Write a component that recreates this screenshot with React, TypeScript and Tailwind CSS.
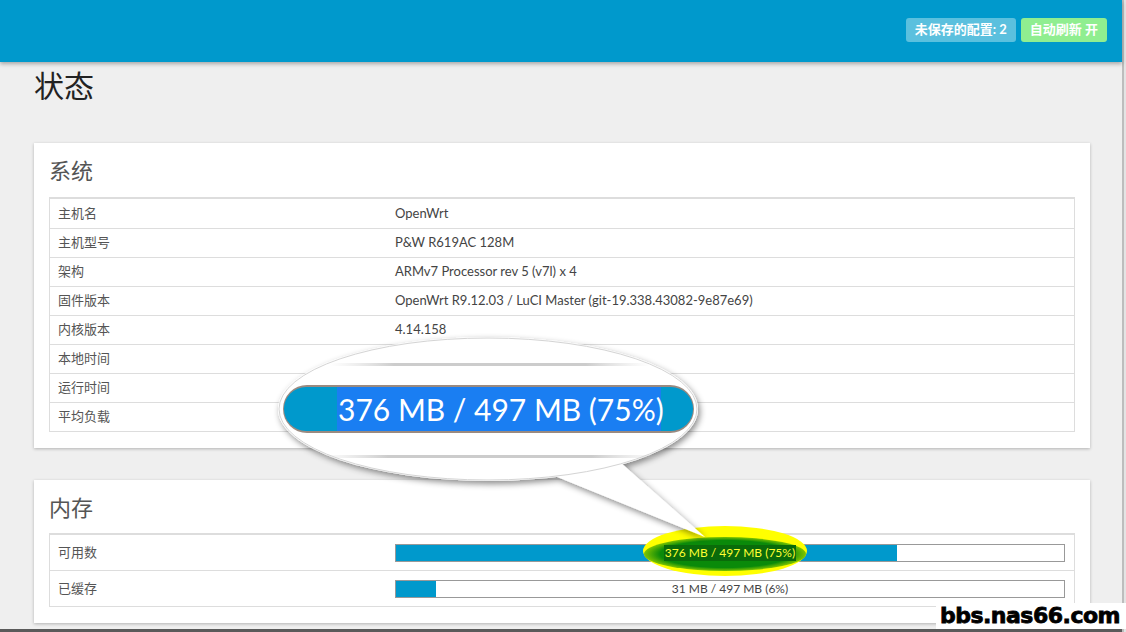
const FONT = "font-['Lato','Noto_Sans_CJK_SC',sans-serif]";

const systemRows: [string, string][] = [
  ["主机名", "OpenWrt"],
  ["主机型号", "P&W R619AC 128M"],
  ["架构", "ARMv7 Processor rev 5 (v7l) x 4"],
  ["固件版本", "OpenWrt R9.12.03 / LuCI Master (git-19.338.43082-9e87e69)"],
  ["内核版本", "4.14.158"],
  ["本地时间", ""],
  ["运行时间", ""],
  ["平均负载", ""],
];

function Badge({ label, color }: { label: string; color: string }) {
  return (
    <span
      className={`${color} h-[24px] px-[9px] rounded-[3px] flex items-center text-white text-[13px] font-bold`}
    >
      {label}
    </span>
  );
}

function Bar({ percent, text, marked }: { percent: number; text: string; marked?: boolean }) {
  return (
    <div className="relative h-[18px] w-full border border-[#999] bg-white">
      <div className="absolute left-0 top-0 bottom-0 bg-[#0099cc]" style={{ width: `${percent}%` }} />
      <div className="relative z-20 h-full flex items-center justify-center text-[12px] leading-none">
        {marked ? (
          <span className="bg-[#0a6b0a] text-[#ffff33] px-[1px] py-[2px]">{text}</span>
        ) : (
          <span className="text-[#444]">{text}</span>
        )}
      </div>
    </div>
  );
}

function Card({ title, children, className }: { title: string; children: React.ReactNode; className?: string }) {
  return (
    <div className={`bg-white px-[15px] pt-[14px] pb-[16px] shadow-[0_1px_3px_rgba(0,0,0,0.25)] ${className ?? ""}`}>
      <h2 className="text-[22px] leading-[28px] text-[#555] mb-[12px]">{title}</h2>
      {children}
    </div>
  );
}

function Callout() {
  return (
    <>
      <svg className="absolute left-0 top-0 z-10 pointer-events-none" width="1126" height="632">
        <defs>
          <radialGradient id="glow" cx="50%" cy="50%" r="50%">
            <stop offset="80%" stopColor="#0a8a0a" />
            <stop offset="100%" stopColor="#7fc400" />
          </radialGradient>
        </defs>
        <ellipse cx="725" cy="551" rx="82" ry="25" fill="#ffff00" />
        <ellipse cx="725" cy="554" rx="81" ry="17" fill="url(#glow)" />
      </svg>
      <svg className="absolute left-0 top-0 z-30 pointer-events-none" width="1126" height="632">
        <defs>
          <filter id="shadow" x="-20%" y="-20%" width="140%" height="160%">
            <feDropShadow dx="2" dy="3" stdDeviation="3" floodColor="#000" floodOpacity="0.45" />
          </filter>
          <linearGradient id="line" x1="0" x2="1">
            <stop offset="0%" stopColor="#ddd" stopOpacity="0" />
            <stop offset="20%" stopColor="#ccc" />
            <stop offset="80%" stopColor="#ccc" />
            <stop offset="100%" stopColor="#ddd" stopOpacity="0" />
          </linearGradient>
        </defs>
        <g filter="url(#shadow)">
          <ellipse cx="488" cy="409" rx="210" ry="72" fill="#fff" />
          <polygon points="540,470 612,455 705,537" fill="#fff" />
        </g>
        <ellipse cx="488" cy="409" rx="209" ry="71" fill="none" stroke="#d4d4d4" strokeWidth="1" />
        <polygon points="536,473 614,458 620,462 545,476" fill="#fff" />
        <rect x="330" y="363" width="320" height="3" fill="url(#line)" />
        <rect x="320" y="455" width="340" height="3" fill="url(#line)" />
        <rect x="283" y="385" width="411" height="48" rx="24" fill="#9a8a80" />
        <rect x="284" y="387" width="409" height="44" rx="22" fill="#0099cc" />
      </svg>
      <div className="absolute z-40 left-[337px] top-[387px] w-[324px] h-[44px] bg-[#1a7ef2] text-white text-[30px] leading-[44px] pl-[1px] whitespace-nowrap">
        376 MB / 497 MB (75%)
      </div>
    </>
  );
}

export default function App() {
  return (
    <div className={`relative w-[1126px] h-[632px] overflow-hidden flex bg-[#efefef] ${FONT}`}>
      <div className="flex-1 flex flex-col">
        <header className="h-[62px] shrink-0 bg-[#0099cc] flex items-center justify-end gap-[5px] pr-[15px] pb-[2px] shadow-[0_2px_4px_rgba(0,0,0,0.3)] relative z-[5]">
          <Badge label="未保存的配置: 2" color="bg-[#5bc0de]" />
          <Badge label="自动刷新 开" color="bg-[#90ee90]" />
        </header>
        <main className="pl-[34px] pr-[32px]">
          <h1 className="mt-[5px] text-[30px] leading-[36px] text-[#222]">状态</h1>
          <Card title="系统" className="mt-[40px]">
            <div className="border border-[#ddd] border-t-2 text-[13px] text-[#555]">
              {systemRows.map(([k, v], i) => (
                <div key={k} className={`h-[29px] flex items-center ${i > 0 ? "border-t border-[#ddd]" : ""}`}>
                  <div className="w-[345px] pl-[8px] shrink-0">{k}</div>
                  <div className="text-[#444]">{v}</div>
                </div>
              ))}
            </div>
          </Card>
          <Card title="内存" className="mt-[32px]">
            <div className="-mt-[1px] border border-[#ddd] border-t-2 text-[13px] text-[#555]">
              <div className="h-[35px] flex items-center">
                <div className="w-[345px] pl-[8px] shrink-0">可用数</div>
                <div className="flex-1 pr-[9px]">
                  <Bar percent={75} text="376 MB / 497 MB (75%)" marked />
                </div>
              </div>
              <div className="h-[36px] flex items-center border-t border-[#ddd]">
                <div className="w-[345px] pl-[8px] shrink-0">已缓存</div>
                <div className="flex-1 pr-[9px]">
                  <Bar percent={6} text="31 MB / 497 MB (6%)" />
                </div>
              </div>
            </div>
          </Card>
          <div className="mt-[6px] h-[4px] bg-[#5a5a5a] -ml-[34px] -mr-[32px]" />
        </main>
      </div>
      <div className="w-[4px] shrink-0 border-l-2 border-[#bdbdbd] bg-[#e4e4e4]" />
      <Callout />
      <div className="absolute z-40 right-0 bottom-[3px] h-[26px] pl-[4px] pr-[6px] bg-white flex items-center">
        <span className="block font-['DejaVu_Sans',sans-serif] font-bold text-[22px] leading-none tracking-[-0.5px] text-black whitespace-nowrap [-webkit-text-stroke:0.8px_black]">
          bbs.nas66.com
        </span>
      </div>
    </div>
  );
}
